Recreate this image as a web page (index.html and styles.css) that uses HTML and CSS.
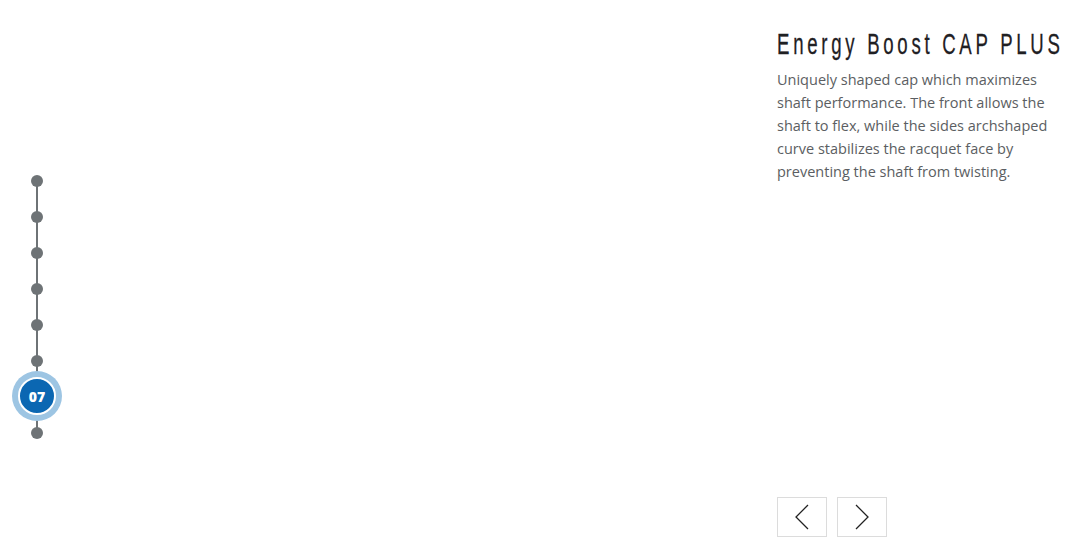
FILE: index.html
```html
<!DOCTYPE html>
<html>
<head>
  <meta charset="utf-8">
  <title>Energy Boost CAP PLUS</title>
  <link rel="stylesheet" href="styles.css">
</head>
<body>

  <div class="page">

    <nav class="timeline">
      <span class="dot"></span>
      <span class="dot"></span>
      <span class="dot"></span>
      <span class="dot"></span>
      <span class="dot"></span>
      <span class="dot"></span>
      <span class="dot active"><span class="num">07</span></span>
      <span class="dot"></span>
    </nav>

    <div class="stage"></div>

    <section class="info">
      <h1 class="title"><span class="squeeze">Energy Boost CAP PLUS</span></h1>
      <p class="text">Uniquely shaped cap which maximizes shaft performance. The front allows the shaft to flex, while the sides archshaped curve stabilizes the racquet face by preventing the shaft from twisting.</p>

      <div class="arrows">
        <button class="arrow" aria-label="previous">
          <svg width="14" height="26" viewBox="0 0 14 26"><path d="M13 1 L1 13 L13 25" fill="none" stroke="#222" stroke-width="1.3"/></svg>
        </button>
        <button class="arrow" aria-label="next">
          <svg width="14" height="26" viewBox="0 0 14 26"><path d="M1 1 L13 13 L1 25" fill="none" stroke="#222" stroke-width="1.3"/></svg>
        </button>
      </div>
    </section>

  </div>

</body>
</html>
```

FILE: styles.css
```css
body {
  margin: 0;
  background: #fff;
  font-family: "Open Sans", Arial, sans-serif;
}

.page {
  display: flex;
  height: 549px;
}

/* left timeline */
.timeline {
  width: 74px;
  display: flex;
  flex-direction: column;
  align-items: center;
  gap: 24px;
  padding-top: 175px;
  position: relative;
}

.timeline::before {
  content: "";
  position: absolute;
  left: 36px;
  top: 181px;
  height: 252px;
  width: 2px;
  background: #6e7376;
}

.dot {
  width: 12px;
  height: 12px;
  border-radius: 50%;
  background: #6e7376;
  position: relative;
  z-index: 1;
}

.dot.active {
  background: none;
}

.dot.active .num {
  position: absolute;
  left: -13px;
  top: -14px;
  width: 34px;
  height: 34px;
  border-radius: 50%;
  background: #0b67b2;
  border: 2px solid #fff;
  box-shadow: 0 0 0 6px #9dc5e3;
  color: #fff;
  font-family: "Open Sans", sans-serif;
  font-weight: 800;
  font-size: 14px;
  display: flex;
  align-items: center;
  justify-content: center;
}

.stage {
  flex: 1;
}

/* right column */
.info {
  width: 297px;
  display: flex;
  flex-direction: column;
}

.title {
  margin: 26px 0 0;
  font-family: "Liberation Sans", Arial, sans-serif;
  font-weight: normal;
  font-size: 30px;
  line-height: 36px;
  color: #1f2023;
  white-space: nowrap;
  overflow: hidden;
}

.squeeze {
  display: inline-block;
  letter-spacing: 6px;
  transform: scaleX(0.62);
  transform-origin: left center;
  -webkit-text-stroke: 0.3px #1f2023;
}

.text {
  margin: 6px 0 0;
  width: 285px;
  font-family: "Open Sans", sans-serif;
  font-size: 14.5px;
  line-height: 23px;
  color: #5b5e62;
}

.arrows {
  margin-top: auto;
  margin-bottom: 12px;
  display: flex;
  gap: 10px;
}

.arrow {
  width: 50px;
  height: 40px;
  border: 1px solid #dcdcdc;
  background: #fff;
  padding: 0;
  display: flex;
  align-items: center;
  justify-content: center;
  cursor: pointer;
}
```
